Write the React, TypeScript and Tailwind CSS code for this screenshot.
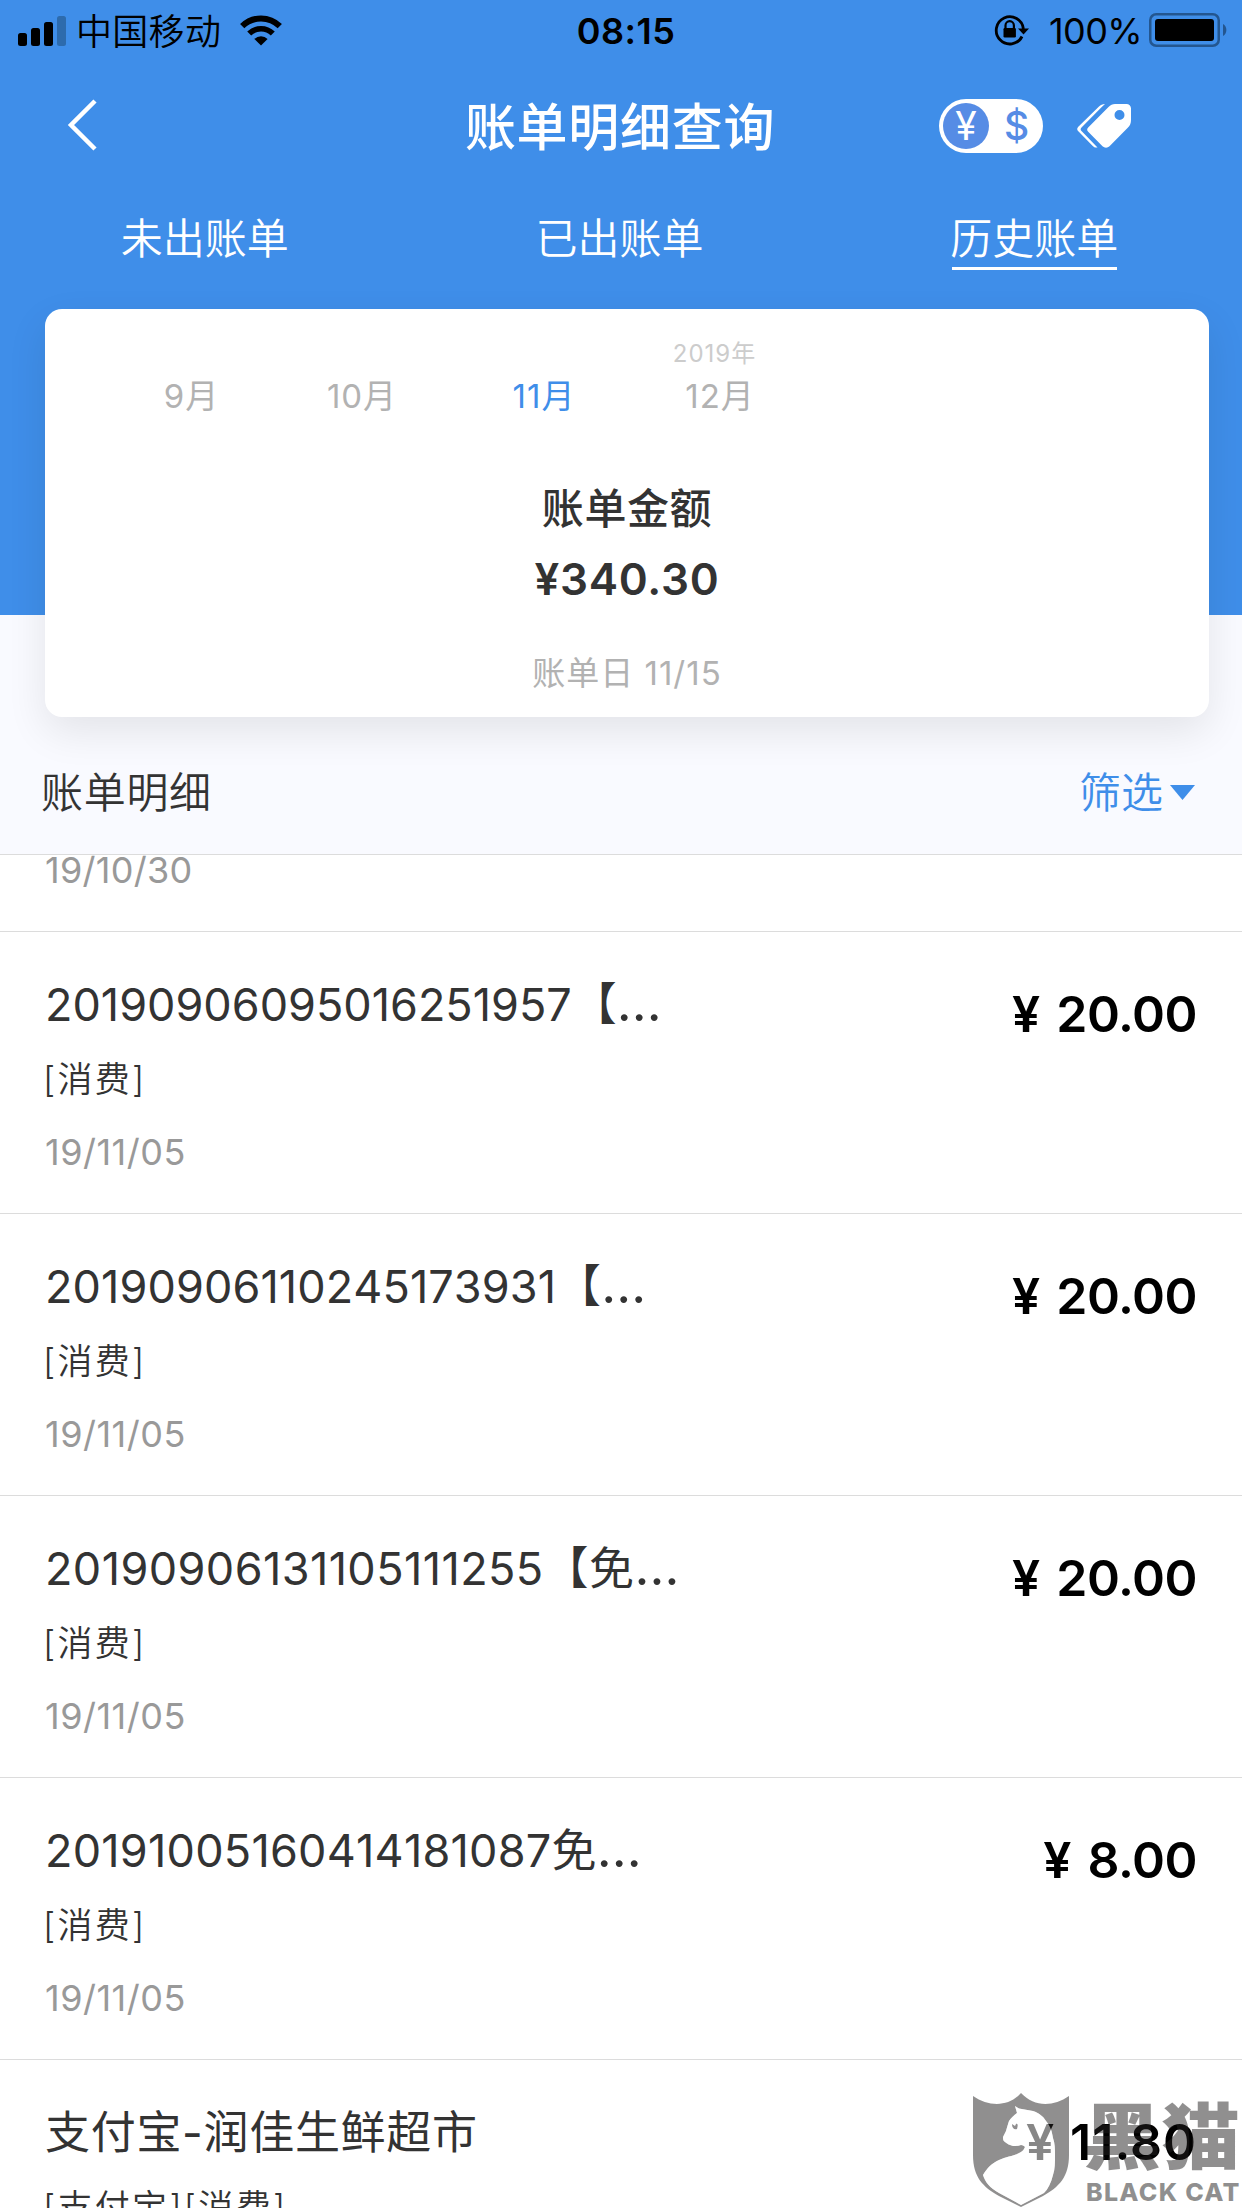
const months = [
    { label: '9月', year: '' },
    { label: '10月', year: '' },
    { label: '11月', year: '', active: true },
    { label: '12月', year: '2019年' },
];

const tabs = ['未出账单', '已出账单', '历史账单'];

const bills = [
    { title: '20190906095016251957【', cut: true, spacing: '', type: '[消费]', date: '19/11/05', amount: '20.00' },
    { title: '20190906110245173931【', cut: true, spacing: 'tracking-[0.1px]', type: '[消费]', date: '19/11/05', amount: '20.00' },
    { title: '20190906131105111255【免', cut: true, spacing: 'tracking-[0.42px]', type: '[消费]', date: '19/11/05', amount: '20.00' },
    { title: '20191005160414181087免', cut: true, spacing: 'tracking-[0.24px]', type: '[消费]', date: '19/11/05', amount: '8.00' },
    { title: '支付宝-润佳生鲜超市', cut: false, spacing: 'tracking-[0.7px]', type: '[支付宝][消费]', date: '19/11/06', amount: '11.80' },
];

function StatusBar() {
    return (
        <div className="grid h-[62px] shrink-0 grid-cols-[1fr_auto_1fr] items-center text-4xl leading-[60px] text-black">
            <div className="flex items-center pl-[18px]">
                <svg width="48" height="30" viewBox="0 0 48 30">
                    <rect x="0" y="17" width="9" height="13" rx="2.5" />
                    <rect x="13" y="12" width="9" height="18" rx="2.5" />
                    <rect x="26" y="6" width="9" height="24" rx="2.5" />
                    <rect x="39" y="0" width="9" height="30" rx="2.5" fill="#2d6bad" />
                </svg>
                <span className="ml-[10px] pt-[2px] font-[350] tracking-[0.3px]">中国移动</span>
                <svg className="mb-[2px] ml-[19px]" width="42" height="31" viewBox="0 0 42 31">
                    <path d="M2.2 11.2a26.6 26.6 0 0 1 37.6 0" fill="none" stroke="#000" strokeWidth="6" />
                    <path d="M9.2 18.6a16.7 16.7 0 0 1 23.6 0" fill="none" stroke="#000" strokeWidth="5.6" />
                    <path d="M21 30.5l-6.6-6.6a9.3 9.3 0 0 1 13.2 0z" />
                </svg>
            </div>
            <div className="pl-[10px] font-semibold tracking-[0.5px]">08:15</div>
            <div className="flex items-center justify-end pr-[14px]">
                <svg className="mb-[2px]" width="36" height="32" viewBox="0 0 36 32">
                    <path d="M28 22.5A13.6 13.6 0 1 1 29.4 15" fill="none" stroke="#000" strokeWidth="2.8" />
                    <path d="M24 14.4h11l-5.5 6z" />
                    <path d="M11.5 15v-3.6a4.2 4.2 0 0 1 8.4 0V15" fill="none" stroke="#000" strokeWidth="2.2" />
                    <rect x="9.5" y="14" width="12.4" height="9.4" rx="1.2" />
                </svg>
                <span className="ml-[19px] tracking-[-0.6px]">100%</span>
                <svg className="mb-[2px] ml-[7px]" width="79" height="34" viewBox="0 0 79 34">
                    <rect x="1.25" y="1.25" width="68.5" height="31.5" rx="6" fill="none" stroke="#235690" strokeWidth="2.5" />
                    <rect x="6" y="6" width="59" height="22" rx="3" />
                    <path d="M74 11a7 7 0 0 1 0 12z" fill="#235690" />
                </svg>
            </div>
        </div>
    );
}

function NavBar() {
    return (
        <div className="grid h-[129px] shrink-0 grid-cols-[1fr_auto_1fr] items-center">
            <svg className="mb-1 ml-[66px]" width="34" height="54" viewBox="0 0 34 54">
                <path d="M29 3L5 27l24 24" fill="none" stroke="#fff" strokeWidth="4.5" />
            </svg>
            <h1 className="-ml-[2px] pt-[2px] text-[51px] leading-[76px] font-medium tracking-[0.7px]">账单明细查询</h1>
            <div className="flex items-center justify-end pr-[110px] pb-[2px]">
                <div className="flex h-[54px] w-[104px] items-center rounded-full bg-white pl-1 text-[39px] leading-none">
                    <span className="flex h-[46px] w-[46px] items-center justify-center rounded-full bg-[#568ce5]">¥</span>
                    <span className="ml-[15px] font-medium text-[#568ce5]">$</span>
                </div>
                <svg className="ml-[34px]" width="55" height="46" viewBox="0 0 55 46">
                    <path
                        fill="#fff"
                        fillRule="evenodd"
                        d="M38 1h11.5a4.5 4.5 0 0 1 4.5 4.5V17c0 3-1 5.5-3 7.5L32.5 43.2a5 5 0 0 1-7 0L11.2 28.8a3 3 0 0 1 0-4.2L31.5 4c2-2 4-3 6.5-3zM42.5 7a5 5 0 1 0 0 10 5 5 0 0 0 0-10z"
                    />
                    <path
                        fill="#fff"
                        d="M28 1c-2.5 0-4.5 1-6 2.5L1.3 23.8a3.2 3.2 0 0 0 0 4.5L15.5 42.8c1.5 1.6 3 2 5 1.7L4.5 28a2.6 2.6 0 0 1 0-3.6L24.5 4.2C25.8 2.900 27 2 28 1z"
                    />
                </svg>
            </div>
        </div>
    );
}

function BillCard() {
    return (
        <div className="relative z-10 mt-6 ml-[45px] flex h-[408px] w-[1164px] shrink-0 flex-col items-center rounded-[17px] bg-white text-[#333] shadow-[0_15px_40px_rgba(0,0,0,0.09)]">
            <div className="grid w-full grid-cols-[175px_166px_198px_154px] pt-[27px] pl-[59px] text-center">
                {months.map((month) => (
                    <div key={month.label} className="flex flex-col">
                        <span className="h-[35px] pr-[11px] text-2xl leading-[35px] tracking-[1px] text-[#ccc]">{month.year}</span>
                        <span className={month.active ? 'text-[33px] leading-[50px] tracking-[1px] text-[#3f8ee9]' : 'text-[33px] leading-[50px] tracking-[1px] text-[#b2b2b2]'}>
                            {month.label}
                        </span>
                    </div>
                ))}
            </div>
            <div className="mt-[57px] text-[42px] leading-[62px] font-medium tracking-[0.6px]">账单金额</div>
            <div className="mt-[9px] text-[44px] leading-[60px] font-semibold tracking-[0.7px]">¥340.30</div>
            <div className="mt-[39px] text-[33px] leading-[50px] tracking-[1px] text-[#b2b2b2]">账单日 11/15</div>
        </div>
    );
}

function BillRow({ bill }) {
    return (
        <li className="flex h-[282px] shrink-0 justify-between border-b border-[#dcdcdc] pr-[45px] pl-[45px]">
            <div className="pt-[43px] text-[#333]">
                <div className="text-[45px] leading-[60px] font-[380] whitespace-nowrap [font-kerning:none]">
                    <span className={bill.spacing}>{bill.title}</span>
                    {bill.cut && <span className="text-[52px] leading-none">…</span>}
                </div>
                <div className="mt-[19px] -ml-[2px] text-[35px] leading-[50px] font-[350] tracking-[2.3px]">{bill.type}</div>
                <div className="mt-6 text-4xl leading-[48px] tracking-[0.5px] text-[#999]">{bill.date}</div>
            </div>
            <div className="flex gap-4 pt-[52px] text-[50px] leading-[60px] font-semibold text-black">
                <span>¥</span>
                <span className={bill.amount.startsWith('1') ? 'tracking-[1px]' : 'tracking-[-0.5px]'}>{bill.amount}</span>
            </div>
        </li>
    );
}

function Watermark() {
    const shield = 'M1 4c16 11 36 11 48-3 13 14 32 14 48 3v59c0 22-10 32-26 41L49 115 27 104C11 95 1 85 1 63z';
    const cat =
        'M43 14l4 2.5 14 2.5c6 2 10 5 13 10 5 6 6 11 7 17 2 6 2 11 2 17 0 8 0 14-2 20-2 8-5 14-9 18L49 113 27 101C18 96 13 90 11 83c4-7 9-12 16-15 8-4 16-4 22-8 2-1 3-3 4-5-1-1-2-2-4-2-3 1-6 1-8 1-3-1-6-2-8-4-2-1-2-3-2-5 1-2 2-4 3-6 1-4 2-7 3-10 2-3 5-6 8-8z';
    return (
        <div className="absolute right-0 bottom-0 flex h-[116px] w-[270px]">
            <svg width="98" height="116" viewBox="0 0 98 116" className="shrink-0">
                <path fill="#221f20" fillOpacity="0.5" fillRule="evenodd" d={shield + cat} />
                <path fill="#fff" fillOpacity="0.53" d={cat} />
                <path fill="#908e8f" d="M40 32c0 4 2 6 5 5 1-3 1-6-1-5l-1 2z" />
            </svg>
            <div className="ml-4 flex flex-col whitespace-nowrap text-[#221f20]/50">
                <span className="mt-[5px] -ml-[3px] w-36 origin-left scale-x-[1.09] text-[72px] leading-[80px] font-black">黑猫</span>
                <span className="text-[25px] leading-[30px] font-extrabold tracking-[1.3px]">BLACK CAT</span>
            </div>
        </div>
    );
}

export default function App() {
    return (
        <div className="relative flex h-[2208px] w-[1242px] flex-col overflow-hidden bg-[#f9faff] font-['Inter','Noto_Sans_CJK_SC',sans-serif]">
            <header className="flex h-[615px] shrink-0 flex-col bg-[#3f8ee9] text-white">
                <StatusBar />
                <NavBar />
                <nav className="-ml-[2px] grid h-[94px] shrink-0 grid-cols-3 justify-items-center pt-[18px] text-[42px] leading-[60px] font-[350]">
                    {tabs.map((tab, index) => (
                        <span
                            key={tab}
                            className={
                                index === 2
                                    ? 'h-[61px] w-[165px] border-b-3 border-white indent-[-2px] whitespace-nowrap'
                                    : 'h-[61px] w-[165px] indent-[-2px] whitespace-nowrap'
                            }
                        >
                            {tab}
                        </span>
                    ))}
                </nav>
                <BillCard />
            </header>
            <div className="flex h-[240px] shrink-0 items-end justify-between border-b border-[#dcdcdc] pr-[47px] pb-[31px] pl-[41px] text-[42px] leading-[60px] font-[350] text-[#333]">
                <h2 className="tracking-[0.7px]">账单明细</h2>
                <div className="flex items-center text-[#3f8ee9]">
                    筛选
                    <svg className="mb-[2px] ml-[7px]" width="25" height="15" viewBox="0 0 25 15">
                        <path d="M0 0h25L12.5 15z" fill="#3f8ee9" />
                    </svg>
                </div>
            </div>
            <div className="h-[77px] shrink-0 border-b border-[#dcdcdc] bg-white pl-[45px] text-4xl leading-[31px] tracking-[0.3px] text-[#999]">19/10/30</div>
            <ul className="bg-white">
                {bills.map((bill) => (
                    <BillRow key={bill.title} bill={bill} />
                ))}
            </ul>
            <Watermark />
        </div>
    );
}
